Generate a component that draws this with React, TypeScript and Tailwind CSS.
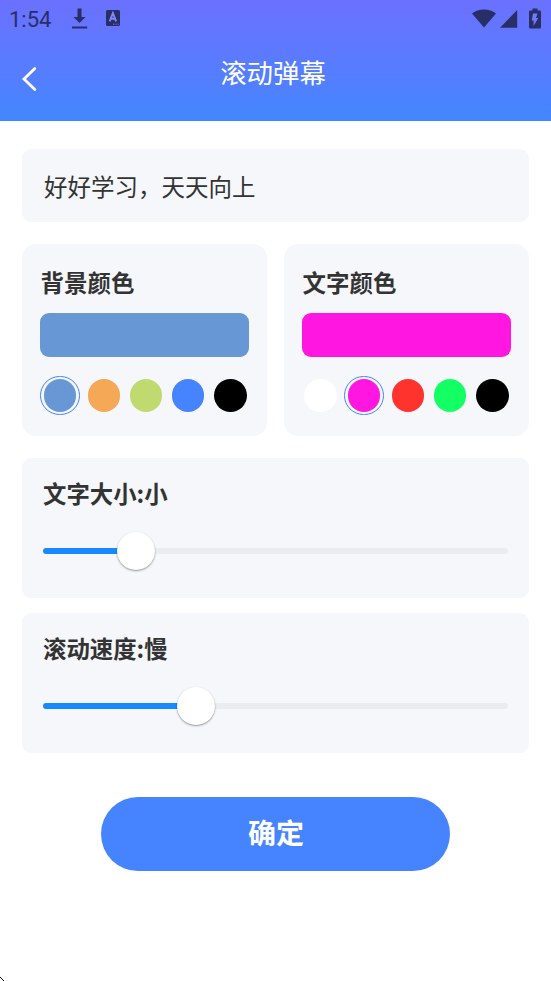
import { useState } from 'react';

const backgroundColors = ['#6897d6', '#f5a855', '#c0da70', '#4684ff', '#000000'];
const textColors = ['#ffffff', '#ff16e0', '#ff332e', '#14ff64', '#000000'];

function StatusBar() {
  return (
    <div className="flex h-[37px] items-center justify-between pl-[9px] pr-[10px] text-[#272f66]">
      <div className="flex items-center">
        <span className="w-[62px] pt-[3px] font-[Roboto] text-[22px] leading-none">1:54</span>
        <svg className="h-[22px] w-[17px]" viewBox="0 0 17 22" fill="currentColor">
          <path d="M6.500 0.500h4V9h4L8.500 15 2.500 9h4z" />
          <path d="M1 18.500h15.200v2H1z" />
        </svg>
        <svg className="mb-px ml-[17px] h-[18px] w-4" viewBox="0 0 16 18">
          <rect x="1" y="1" width="14" height="16" rx="1.500" fill="currentColor" />
          <path d="M4.700 12.300 7.900 4.200 11.100 12.300M5.900 9.700h4" fill="none" stroke="#8188fa" strokeWidth="1.900" />
          <path d="M8 15.200h6" stroke="#8188fa" strokeWidth="0.800" strokeDasharray="1 0.600" />
        </svg>
      </div>
      <div className="flex items-center">
        <svg className="h-5 w-6" viewBox="0 0 24 20" fill="currentColor">
          <path d="M0 4.500C3.300 2 7.500 0.500 12 0.500S20.700 2 24 4.500L12 18.500z" />
        </svg>
        <svg className="ml-[3px] h-5 w-[19px]" viewBox="0 0 19 20" fill="currentColor">
          <path d="M1 18.700 18.200 1V18.700z" />
        </svg>
        <svg className="mb-px ml-[11px] h-[21px] w-3" viewBox="0 0 12 21">
          <path d="M3.500 0.500h5v2h2.200q1.300 0 1.300 1.300v15.400q0 1.300-1.300 1.300H1.300Q0 20.500 0 19.200V3.800Q0 2.500 1.300 2.500h2.200z" fill="currentColor" />
          <path d="M4 5.500h4.500L7 10h2.200L4.600 18v-5.600H2.800z" fill="#6f7bff" />
        </svg>
      </div>
    </div>
  );
}

function ColorCard({ title, colors, initial }: { title: string; colors: string[]; initial: number }) {
  const [selected, setSelected] = useState(initial);

  return (
    <section className="h-[191.5px] w-[245px] rounded-[14px] bg-[#f5f7fb] pt-[21px]">
      <h2 className="ml-[18.5px] text-[23.5px] font-bold leading-[34px]">{title}</h2>
      <div
        className="mx-[18px] mt-[14px] h-[43.5px] rounded-[9px]"
        style={{ backgroundColor: colors[selected] }}
      />
      <div className="mt-[19px] flex h-10 items-center pl-[15.2px]">
        {colors.map((color, i) => (
          <button
            key={color}
            aria-label={color}
            onClick={() => setSelected(i)}
            className={
              i === selected
                ? 'mx-[3px] flex h-[39.5px] w-[39.5px] shrink-0 items-center justify-center rounded-full border border-[#4684ff]'
                : 'flex h-10 w-[42.2px] shrink-0 items-center justify-center'
            }
          >
            <span className="h-[32.5px] w-[32.5px] shrink-0 rounded-full" style={{ backgroundColor: color }} />
          </button>
        ))}
      </div>
    </section>
  );
}

function SliderCard({ label, value }: { label: string; value: number }) {
  return (
    <section className="h-[140px] rounded-[9px] bg-[#f5f7fb] px-[21px] pt-[18px]">
      <h2 className="text-[23.4px] font-bold leading-[34px]">{label}</h2>
      <div className="mt-[21px] flex h-10 items-center">
        <div className="h-1.5 rounded-l-[3px] bg-[#1989ff]" style={{ width: `${value}%` }} />
        <div className="z-10 -mx-[19px] h-[38px] w-[38px] shrink-0 rounded-full bg-white shadow-[0_1px_2px_rgba(0,0,0,0.4)]" />
        <div className="h-1.5 flex-1 rounded-r-[3px] bg-[#ebecf0]" />
      </div>
    </section>
  );
}

export default function App() {
  return (
    <div className="flex h-[981px] w-[551px] flex-col overflow-hidden bg-white font-['Noto_Sans_CJK_SC',sans-serif] text-[#333333]">
      <header className="h-[120.5px] shrink-0 bg-linear-to-b from-[#6b70ff] to-[#4186ff] text-white">
        <StatusBar />
        <div className="flex h-[72px] items-center">
          <button aria-label="返回" className="ml-[21px] mt-[11px]">
            <svg className="h-[26px] w-4" viewBox="0 0 16 26" fill="none" stroke="currentColor" strokeWidth="2.800">
              <path d="M13.800 2.500 3 13 13.800 23.500" strokeLinecap="round" />
            </svg>
          </button>
          <h1 className="flex-1 pb-0.5 pr-[42px] text-center text-[26.4px] leading-[38px]">滚动弹幕</h1>
        </div>
      </header>

      <main className="flex flex-col px-[22px] pt-[28.5px]">
        <div className="flex h-[73px] items-center rounded-[9px] bg-[#f5f7fb] px-[22px] pt-0.5 text-[23.5px]">
          好好学习，天天向上
        </div>

        <div className="mt-[22px] flex justify-between">
          <ColorCard title="背景颜色" colors={backgroundColors} initial={0} />
          <ColorCard title="文字颜色" colors={textColors} initial={1} />
        </div>

        <div className="mt-[22.5px] flex flex-col gap-[15px]">
          <SliderCard label="文字大小:小" value={20} />
          <SliderCard label="滚动速度:慢" value={33} />
        </div>

        <button className="mt-11 h-[73.5px] w-[349px] self-center rounded-full bg-[#4684ff] pb-[3px] pl-px text-[28px] font-bold text-white">
          确定
        </button>
      </main>

      {/* pointer tip at the window edge */}
      <svg className="mt-auto h-1 w-1" viewBox="0 0 4 4" shapeRendering="crispEdges">
        <path d="M0 0h1v1H0zM1 1h1v1H1zM2 2h1v1H2zM3 3h1v1H3z" fill="#111" />
      </svg>
    </div>
  );
}
